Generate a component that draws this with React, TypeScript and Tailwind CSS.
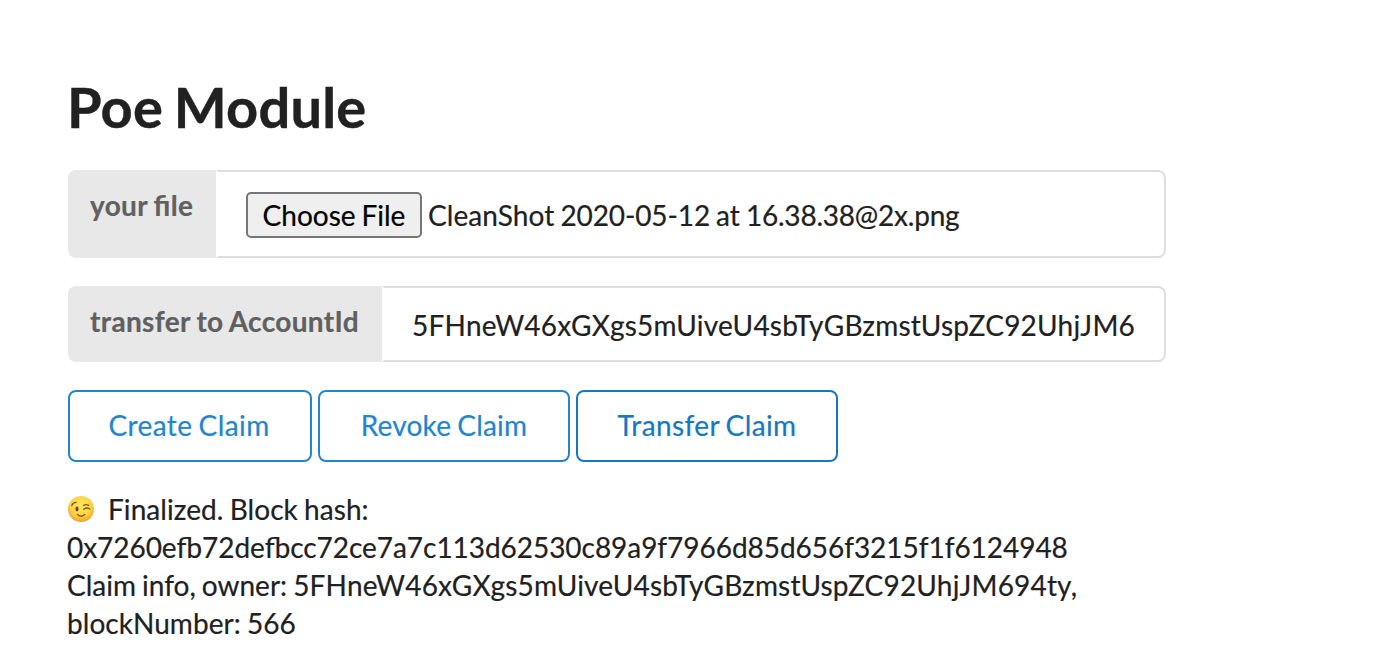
const Wink = () => (
  <svg className="h-[28px] w-[28px] shrink-0" viewBox="0 0 28 28">
    <defs>
      <radialGradient id="face" cx="50%" cy="38%" r="62%">
        <stop offset="0" stopColor="#ffe95c" />
        <stop offset="0.65" stopColor="#fdd345" />
        <stop offset="1" stopColor="#ee9f2c" />
      </radialGradient>
    </defs>
    <circle cx="14" cy="14" r="13" fill="url(#face)" />
    <ellipse cx="10" cy="14" rx="1.6" ry="2.4" fill="#70401a" />
    <path d="M16.8 14.2q3-2.4 6-.2M4.8 10.6q1-3 4.2-3.2M16.5 10.3q3-1.4 5.2 0M10.5 19.4q3.6 3.6 7.2 0" fill="none" stroke="#8a5620" strokeWidth="1.4" strokeLinecap="round" />
  </svg>
);

export default function App() {
  return (
    <main className="h-[652px] overflow-hidden bg-white pl-[68px] pt-[71px] font-[Lato,sans-serif] text-[28px] leading-[38px] text-[#212121] [-webkit-text-stroke:0.2px] [font-feature-settings:'liga'_1] [word-spacing:-1.1px]">
      <h1 className="-ml-px h-[99px] text-[56px] font-bold leading-[72px] tracking-[0.2px] [-webkit-text-stroke:0.4px] [word-spacing:-3px]">Poe Module</h1>
      <div className="flex h-[88px] w-[1098px]">
        <label className="w-[148px] rounded-l-[8px] bg-[#e8e8e8] pl-[22px] pt-[16px] font-bold tracking-[0.35px] text-[#606060]">your file</label>
        <div className="flex flex-1 items-center rounded-r-[8px] border-2 border-[#dededf] border-l-transparent pl-[28px] pt-[2px]">
          <button className="h-[46px] w-[176px] rounded-[5px] border-2 border-[#767676] bg-[#efefef] text-black [word-spacing:-1.2px]">Choose File</button>
          <span className="ml-[6px] whitespace-nowrap"><span className="tracking-[0.08px]">CleanShot </span><span className="tracking-[-0.12px]">2020-05-12</span> at <span className="tracking-[-0.22px]">16.38.38@2x.png</span></span>
        </div>
      </div>
      <div className="mt-[28px] flex h-[76px] w-[1098px]">
        <label className="w-[314px] whitespace-nowrap rounded-l-[8px] bg-[#e8e8e8] pl-[22px] pt-[16px] font-bold tracking-[0.36px] text-[#606060]">transfer to AccountId</label>
        <div className="flex flex-1 items-center rounded-r-[8px] border-2 border-[#dededf] border-l-transparent pl-[28px] pt-[2px] tracking-[0.23px]">5FHneW46xGXgs5mUiveU4sbTyGBzmstUspZC92UhjJM6</div>
      </div>
      <div className="mt-[28px] flex h-[72px] gap-[6px]">
        <button className="w-[244px] rounded-[8px] border-2 border-[#2185d0] pb-[2px] pr-[2px] tracking-[0.4px] text-[#2185d0] [word-spacing:-1.3px]">Create Claim</button>
        <button className="w-[252px] rounded-[8px] border-2 border-[#2185d0] pb-[2px] tracking-[0.2px] text-[#2185d0] [word-spacing:-1.3px]">Revoke Claim</button>
        <button className="w-[262px] rounded-[8px] border-2 border-[#1678c2] pb-[2px] tracking-[0.38px] text-[#1678c2] [word-spacing:-1.3px]">Transfer Claim</button>
      </div>
      <div className="-ml-px mt-[28px] whitespace-nowrap">
        <div className="flex items-center gap-[13px]"><Wink /><span className="tracking-[0.07px]">Finalized. Block hash:</span></div>
        <div className="tracking-[-0.045px]">0x7260efb72defbcc72ce7a7c113d62530c89a9f7966d85d656f3215f1f6124948</div>
        <div>Claim info, owner: <span className="tracking-[0.18px]">5FHneW46xGXgs5mUiveU4sbTyGBzmstUspZC92UhjJM694ty,</span></div>
        <div className="tracking-[0.05px]">blockNumber: 566</div>
      </div>
    </main>
  );
}
